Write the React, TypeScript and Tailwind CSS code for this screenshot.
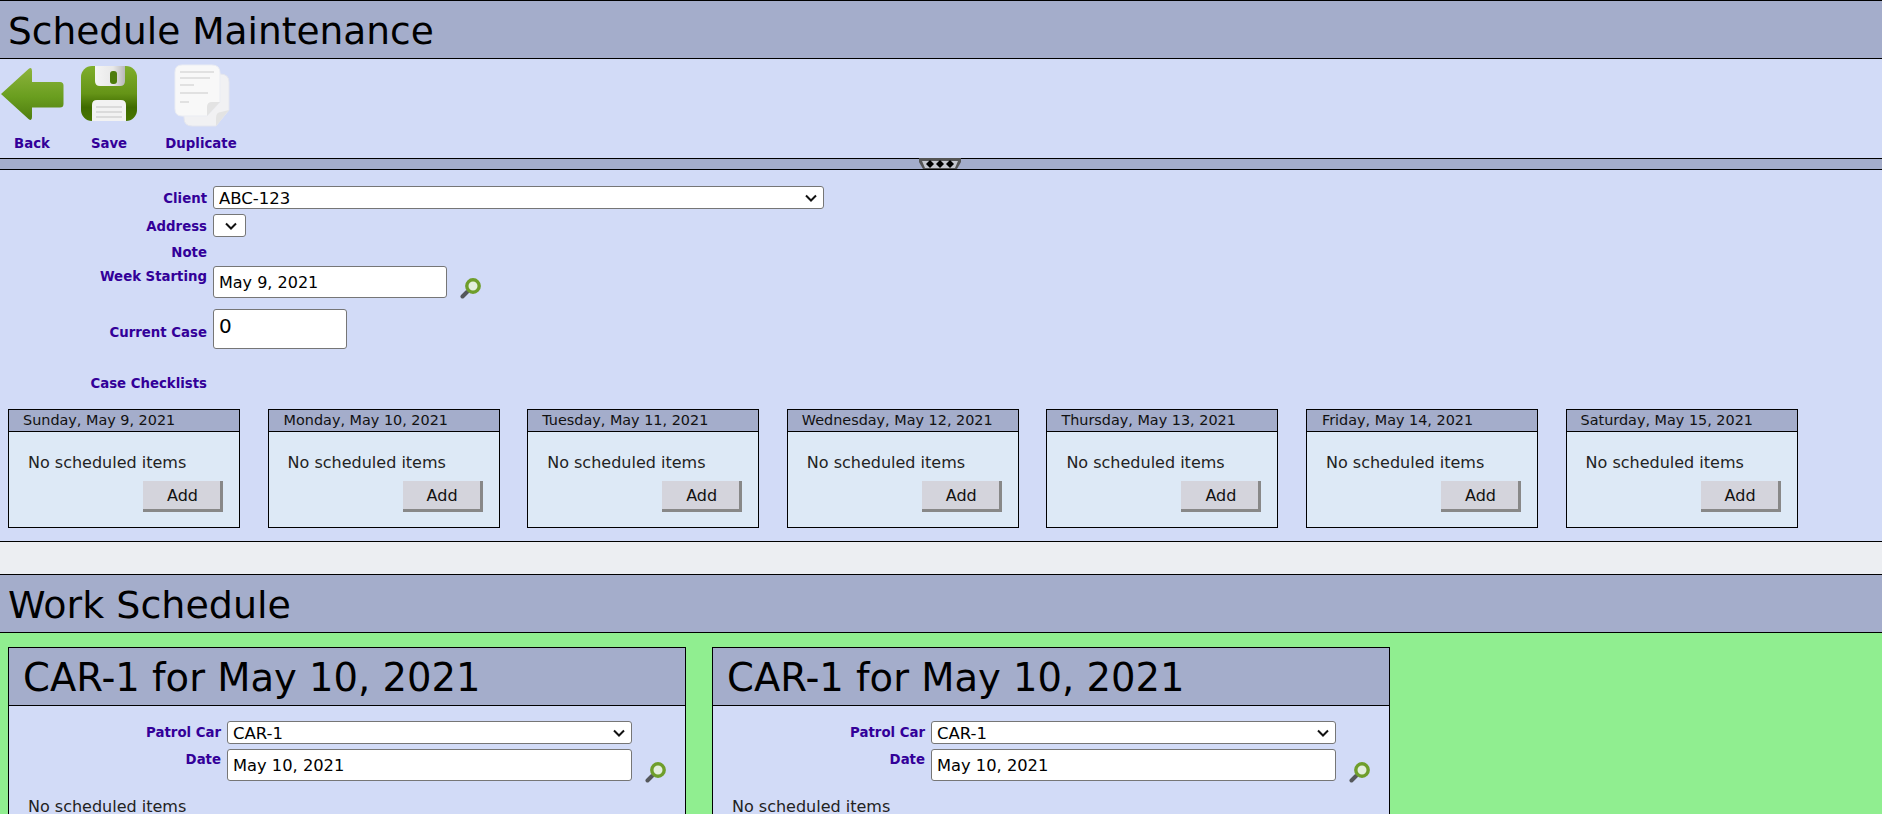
import React from "react";

const days = [
  { label: "Sunday, May 9, 2021", pad: "pl-[14px]" },
  { label: "Monday, May 10, 2021", pad: "pl-[15px]" },
  { label: "Tuesday, May 11, 2021", pad: "pl-[14px]" },
  { label: "Wednesday, May 12, 2021", pad: "pl-[14px]" },
  { label: "Thursday, May 13, 2021", pad: "pl-[14px]" },
  { label: "Friday, May 14, 2021", pad: "pl-[15px]" },
  { label: "Saturday, May 15, 2021", pad: "pl-[14px]" },
];

const labelClass = "text-[13.3px] font-bold text-[#330099] text-right leading-[14px] whitespace-nowrap";

const BackIcon = () => (
  <svg width="64" height="56" viewBox="0 0 64 56">
    <defs>
      <linearGradient id="backFill" x1="0" y1="0" x2="0" y2="1">
        <stop offset="0" stopColor="#8cb33c" />
        <stop offset="0.55" stopColor="#6a9e1f" />
        <stop offset="1" stopColor="#4f7d10" />
      </linearGradient>
    </defs>
    <path
      d="M1 28 L28.5 3 Q32 0.5 32 5 L32 16 L60 16 Q63.5 16 63.5 19.5 L63.5 38 Q63.5 41.5 60 41.5 L32 41.5 L32 51 Q32 55.5 28.5 53 Z"
      fill="url(#backFill)"
    />
  </svg>
);

const SaveIcon = () => (
  <svg width="56" height="56" viewBox="0 0 56 56">
    <defs>
      <linearGradient id="saveFill" x1="0" y1="0" x2="0" y2="1">
        <stop offset="0" stopColor="#7fae2c" />
        <stop offset="0.5" stopColor="#659417" />
        <stop offset="0.75" stopColor="#3f6b00" />
        <stop offset="1" stopColor="#487600" />
      </linearGradient>
      <linearGradient id="saveTop" x1="0" y1="0" x2="1" y2="0">
        <stop offset="0" stopColor="#f4f4f4" />
        <stop offset="0.6" stopColor="#e8e8e8" />
        <stop offset="1" stopColor="#b8b8b8" />
      </linearGradient>
    </defs>
    <rect x="0" y="0" width="56" height="55" rx="11" fill="url(#saveFill)" />
    <path d="M14 0 H44 V15 Q44 20 39 20 H19 Q14 20 14 15 Z" fill="url(#saveTop)" />
    <rect x="29" y="5" width="7" height="13" rx="3" fill="#4e7d0c" />
    <path d="M11 55 V39 Q11 34 16 34 H40 Q45 34 45 39 V55 Z" fill="#f2f2f2" />
    <path d="M15 41 H41 M15 46 H41 M15 51 H41" stroke="#d4d4d4" strokeWidth="1.5" />
  </svg>
);

const DuplicateIcon = () => (
  <svg width="56" height="64" viewBox="0 0 56 64">
    <path
      d="M10 10 H46 Q55 10 55 18 V46 L42 62 H18 Q10 62 10 54 Z"
      fill="#f1f1f3"
      stroke="#e4e6ee"
      strokeWidth="1"
    />
    <path
      d="M8 1 H38 Q46 1 46 9 V38 L33 52 H8 Q1 52 1 45 V8 Q1 1 8 1 Z"
      fill="#f8f8f8"
      stroke="#ebedf3"
      strokeWidth="1"
    />
    <path d="M46 38 L33 52 V43 Q33 38 38 38 Z" fill="#e3e3e3" />
    <path d="M55 46 L42 62 V54 Q42 48 47 48 Z" fill="#e3e3e3" />
    <path
      d="M6 8 H40 M6 14 H36 M6 21 H20 M6 29 H34 M6 38 H15"
      stroke="#d9d9d9"
      strokeWidth="1.5"
    />
  </svg>
);

const MagnifierIcon = () => (
  <svg width="21" height="21" viewBox="0 0 21 21">
    <path d="M2.5 18.5 L7 14" stroke="#55585c" strokeWidth="4" strokeLinecap="round" />
    <circle cx="13" cy="8" r="6.2" fill="#e3eedd" stroke="#6f9e2b" strokeWidth="3.4" />
  </svg>
);

// native select with the arrow drawn over it
const Select = ({
  className,
  value,
  arrow,
}: {
  className: string;
  value: string;
  arrow: string;
}) => (
  <div className={"relative h-[23px] " + className}>
    <select className="appearance-none w-full h-full bg-white border border-[#767676] rounded-[3px] text-[16.5px] pl-[5px] text-black">
      <option>{value}</option>
    </select>
    <svg
      className={"absolute top-[8px] pointer-events-none " + arrow}
      width="12"
      height="8"
      viewBox="0 0 12 8"
    >
      <path d="M1 1.5 L6 6.5 L11 1.5" fill="none" stroke="#111" strokeWidth="2" />
    </svg>
  </div>
);

const Tool = ({
  label,
  className,
  children,
}: {
  label: string;
  className: string;
  children: React.ReactNode;
}) => (
  <div className={"flex flex-col items-center " + className}>
    <div className="h-[66px] flex items-center justify-center">{children}</div>
    <div className="mt-[10px] text-[13.3px] font-bold text-[#330099] leading-[14px] whitespace-nowrap">
      {label}
    </div>
  </div>
);

const DayCard = ({ label, pad }: { label: string; pad: string }) => (
  <div className="w-[232px] h-[119px] border border-black bg-[#dde9f6] shrink-0">
    <div
      className={
        "h-[22px] bg-[#a4adcb] border-b border-black text-[14.4px] leading-[21px] text-[#111] whitespace-nowrap " +
        pad
      }
    >
      {label}
    </div>
    <div className="pl-[19px] pt-[22px] text-[16px] leading-[18px] text-[#222]">No scheduled items</div>
    <div className="flex justify-end pr-[16px] mt-[9px]">
      <button className="w-[80px] h-[31px] pl-[2px] pt-[1px] bg-[#d4d4dc] border-r-[3px] border-b-[3px] border-[#888888] text-[16px] text-[#111]">
        Add
      </button>
    </div>
  </div>
);

const CarCard = () => (
  <div className="w-[678px] h-[300px] border border-black bg-[#d2dbf7] shrink-0">
    <div className="h-[58px] bg-[#a4adcb] border-b border-black pl-[14px] text-[38.5px] leading-[60px] text-black whitespace-nowrap">
      CAR-1 for May 10, 2021
    </div>
    <div className="mt-[15px] grid grid-cols-[212px_1fr] gap-x-[6px] gap-y-[5px] items-start">
      <div className={labelClass + " h-[23px] pt-[5px]"}>Patrol Car</div>
      <Select className="w-[405px]" value="CAR-1" arrow="left-[386px]" />
      <div className={labelClass + " pt-[4px]"}>Date</div>
      <div className="flex items-start h-[32px]">
        <input
          readOnly
          value="May 10, 2021"
          className="w-[405px] h-[32px] bg-white border border-[#767676] rounded-[3px] text-[16.3px] px-[5px] text-black"
        />
        <div className="pt-[13px] ml-[13px]">
          <MagnifierIcon />
        </div>
      </div>
    </div>
    <div className="pl-[19px] mt-[17px] text-[16px] leading-[18px] text-[#222]">No scheduled items</div>
  </div>
);

export default function App() {
  return (
    <div className="h-screen overflow-hidden bg-[#eceef2] font-['DejaVu_Sans',Verdana,sans-serif]">
      <div className="h-[59px] bg-[#a4adcb] border-t border-b border-black pl-[8px] text-[37.5px] leading-[61px] text-black">
        Schedule Maintenance
      </div>
      <div className="h-[99px] bg-[#d2dbf7] flex items-start">
        <Tool label="Back" className="w-[64px] pt-[2px]">
          <BackIcon />
        </Tool>
        <Tool label="Save" className="w-[56px] ml-[17px] pt-[2px]">
          <SaveIcon />
        </Tool>
        <Tool label="Duplicate" className="w-[72px] ml-[28px] pt-[2px]">
          <div className="pt-[4px] pl-[2px]">
            <DuplicateIcon />
          </div>
        </Tool>
      </div>
      <div className="relative h-[12px] bg-[#a4adcb] border-t border-b border-black">
        <div className="absolute left-[919px] -top-[1px]">
          <svg width="42" height="12" viewBox="0 0 42 12">
            <path d="M0 0 H42 V4 L38 11 H4 L0 4 Z" fill="#555" />
            <path d="M3 3 H39 L36 10 H6 Z" fill="#c5c7cf" />
            <g fill="#000">
              <path d="M11 2 L15 6 L11 10 L7 6 Z" />
              <path d="M21 2 L25 6 L21 10 L17 6 Z" />
              <path d="M31 2 L35 6 L31 10 L27 6 Z" />
            </g>
          </svg>
        </div>
      </div>
      <div className="h-[372px] bg-[#d2dbf7] border-b border-black pt-[16px]">
        <div className="grid grid-cols-[207px_1fr] gap-x-[6px] items-start">
          <div className={labelClass + " h-[23px] pt-[6px]"}>Client</div>
          <Select className="w-[611px]" value="ABC-123" arrow="left-[592px]" />
          <div className={labelClass + " h-[23px] mt-[5px] pt-[6px]"}>Address</div>
          <Select className="w-[33px] mt-[5px]" value="" arrow="left-[12px]" />
          <div className={labelClass + " mt-[9px] h-[20px]"}>Note</div>
          <div />
          <div className={labelClass + " pt-[4px] h-[31px]"}>Week Starting</div>
          <div className="flex items-start h-[32px]">
            <input
              readOnly
              value="May 9, 2021"
              className="w-[234px] h-[32px] bg-white border border-[#767676] rounded-[3px] text-[16px] px-[5px] text-black"
            />
            <div className="ml-[13px] pt-[12px]">
              <MagnifierIcon />
            </div>
          </div>
          <div className={labelClass + " mt-[10px] pt-[18px]"}>Current Case</div>
          <input
            readOnly
            value="0"
            className="w-[134px] h-[40px] mt-[11px] bg-white border border-[#767676] rounded-[3px] text-[20px] leading-[24px] px-[5px] pb-[6px] text-black"
          />
          <div className={labelClass + " mt-[28px]"}>Case Checklists</div>
          <div />
        </div>
        <div className="flex gap-[27.6px] pl-[8px] mt-[18px]">
          {days.map((day) => (
            <DayCard key={day.label} label={day.label} pad={day.pad} />
          ))}
        </div>
      </div>
      <div className="h-[32px]" />
      <div className="h-[59px] bg-[#a4adcb] border-t border-b border-black pl-[8px] text-[38px] leading-[61px] text-black">
        Work Schedule
      </div>
      <div className="h-[400px] bg-[#90ee90] flex gap-[26px] pl-[8px] pt-[14px]">
        <CarCard />
        <CarCard />
      </div>
    </div>
  );
}
